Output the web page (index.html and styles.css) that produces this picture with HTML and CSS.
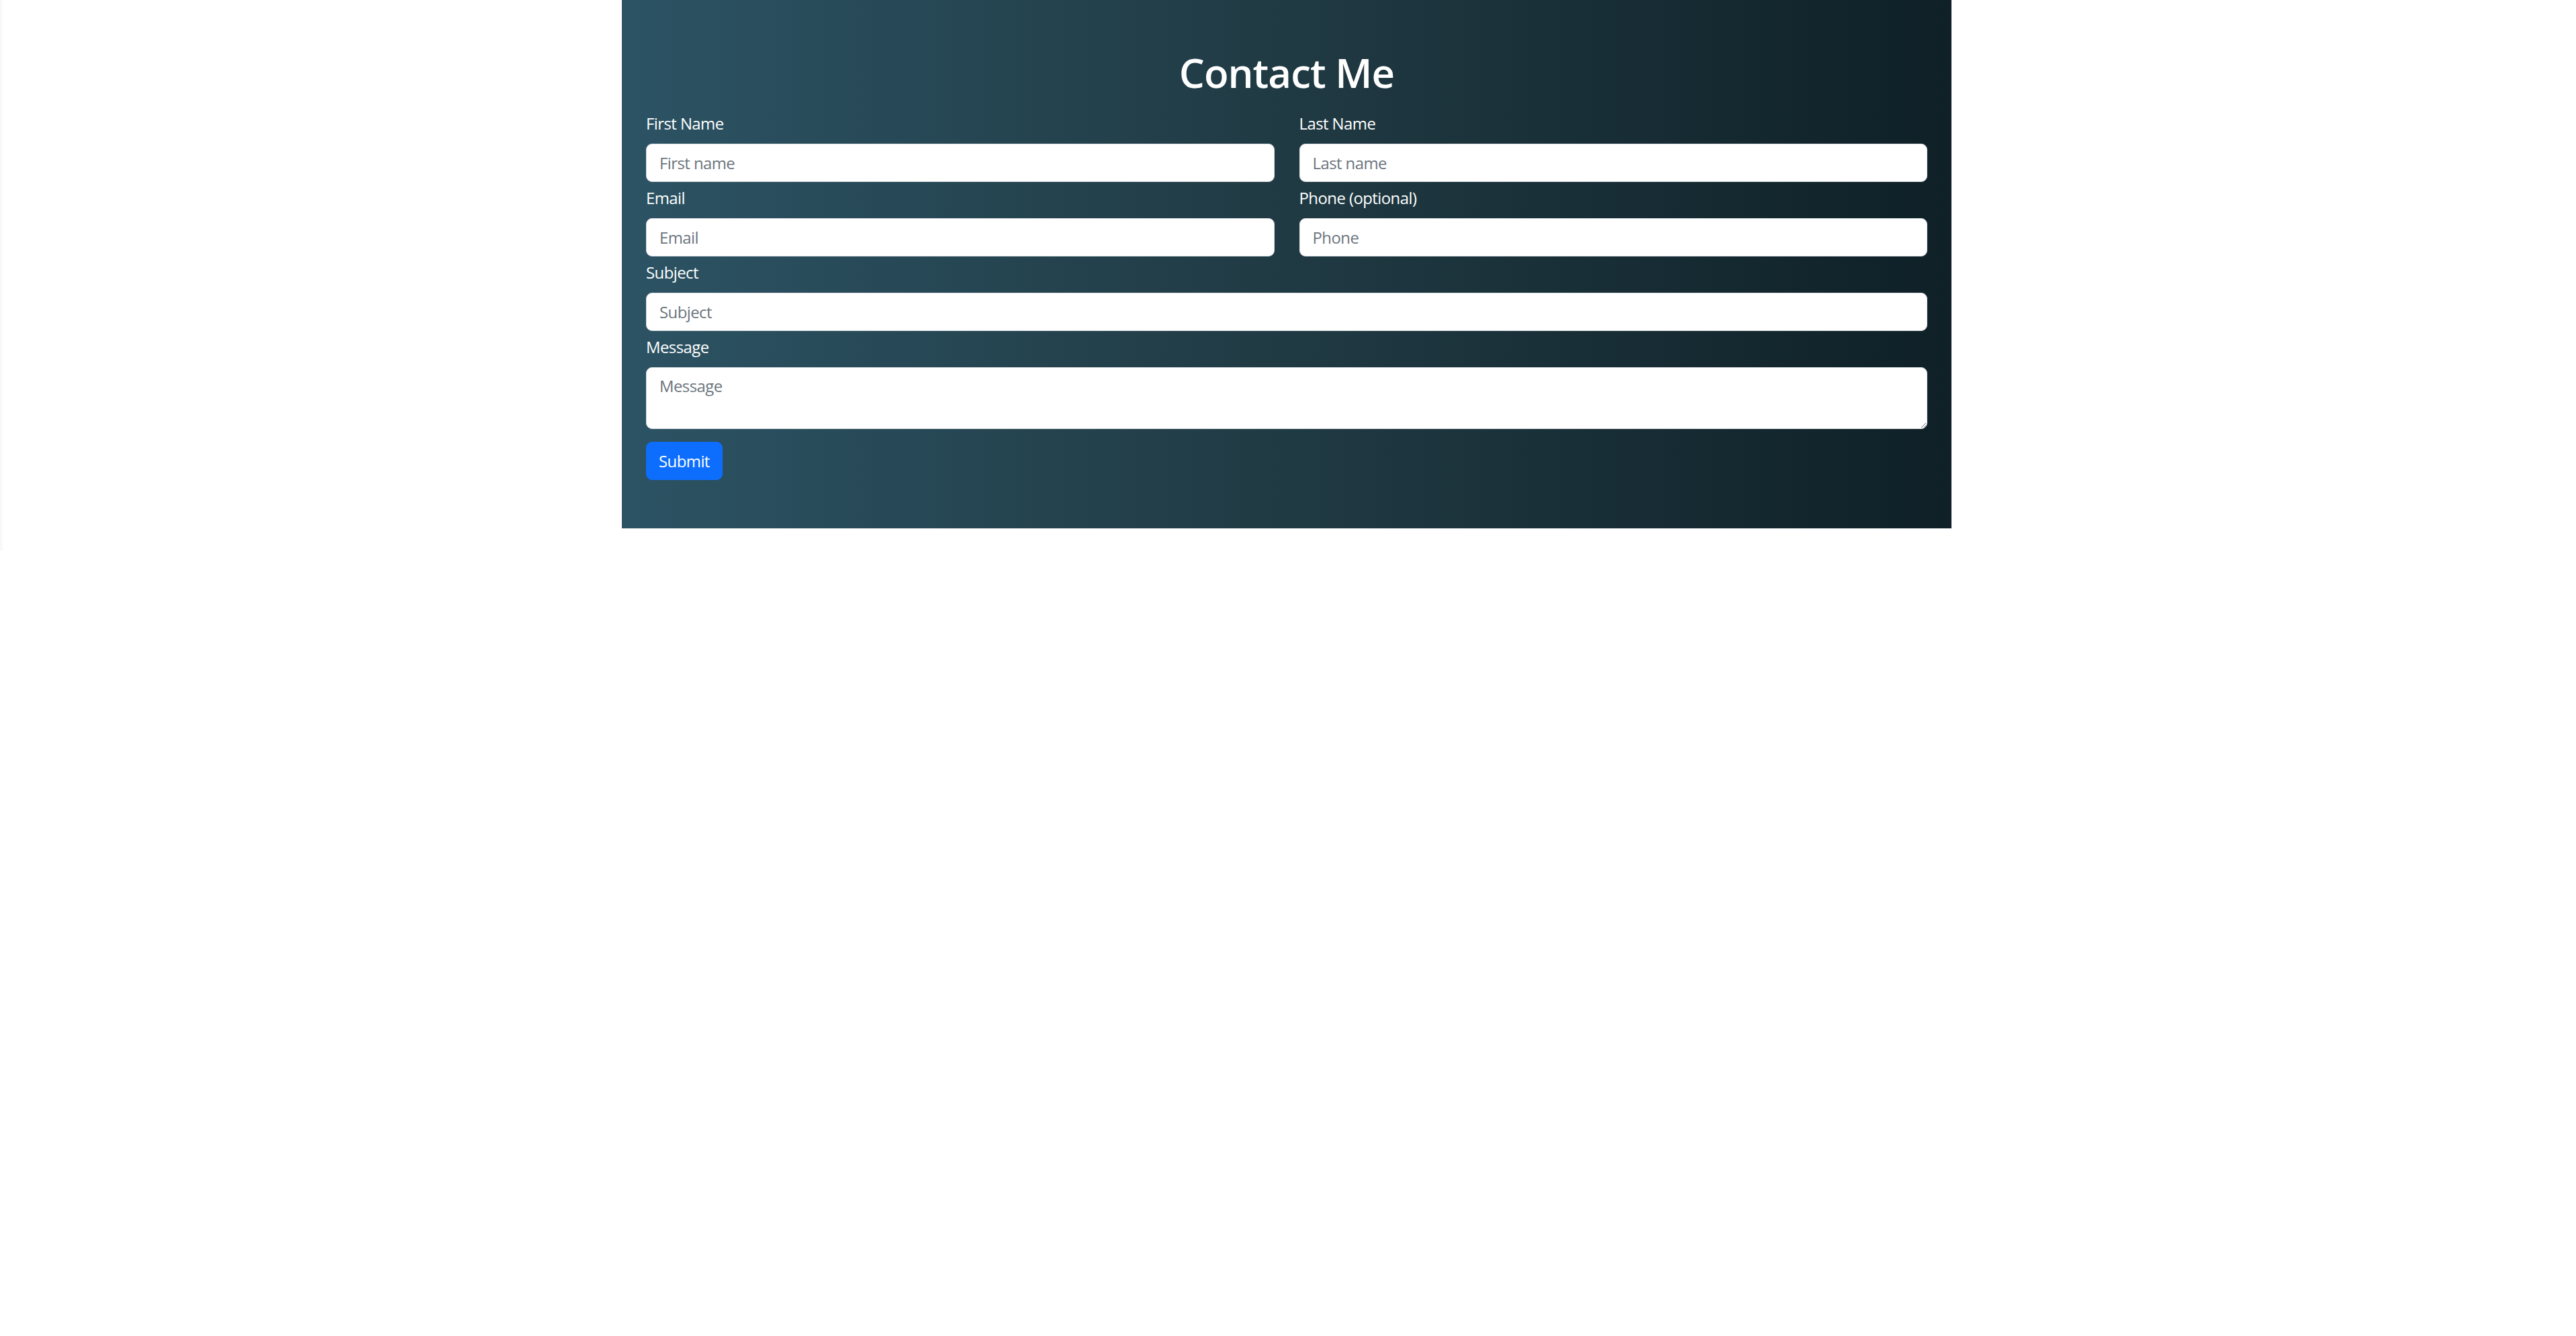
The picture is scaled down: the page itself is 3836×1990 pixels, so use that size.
FILE: index.html
```html
<!DOCTYPE html>
<html lang="en">
<head>
<meta charset="utf-8">
<title>Contact Me</title>
<link rel="stylesheet" href="styles.css">
</head>
<body>
<div class="page">
  <section class="contact">
    <h1 class="contact-title">Contact Me</h1>
    <form class="contact-form">
      <div class="form-row two-col">
        <div class="field">
          <label class="field-label" for="first">First Name</label>
          <input class="field-input" id="first" type="text" placeholder="First name">
        </div>
        <div class="field">
          <label class="field-label" for="last">Last Name</label>
          <input class="field-input" id="last" type="text" placeholder="Last name">
        </div>
      </div>
      <div class="form-row two-col">
        <div class="field">
          <label class="field-label" for="email">Email</label>
          <input class="field-input" id="email" type="email" placeholder="Email">
        </div>
        <div class="field">
          <label class="field-label" for="phone">Phone (optional)</label>
          <input class="field-input" id="phone" type="tel" placeholder="Phone">
        </div>
      </div>
      <div class="form-row">
        <div class="field">
          <label class="field-label" for="subject">Subject</label>
          <input class="field-input" id="subject" type="text" placeholder="Subject">
        </div>
      </div>
      <div class="form-row message-row">
        <div class="field">
          <label class="field-label" for="message">Message</label>
          <textarea class="field-input field-textarea" id="message" rows="2" placeholder="Message"></textarea>
        </div>
      </div>
      <div class="form-actions">
        <button class="submit-btn" type="submit">Submit</button>
      </div>
    </form>
  </section>
</div>
</body>
</html>
```

FILE: styles.css
```css
* {
  box-sizing: border-box;
}

html, body {
  margin: 0;
  padding: 0;
  background: #ffffff;
}

body {
  font-family: "Open Sans", "Noto Sans", "Liberation Sans", sans-serif;
  color: #212529;
}

.page {
  min-height: 820px;
  box-shadow: inset 5px 0 5px -3px rgba(0, 0, 0, 0.05);
}

.contact {
  width: 1980px;
  margin-left: calc(50% - 992px);
  padding: 72px 36px;
  background: linear-gradient(to right, #2c5364 0%, #203a43 50%, #0f2027 100%);
}

.contact-title {
  margin: 0 0 22px;
  font-size: 60px;
  line-height: 72px;
  font-weight: 600;
  letter-spacing: -1px;
  color: #ffffff;
  text-align: center;
}

.contact-form {
  display: flex;
  flex-direction: column;
}

.form-row {
  margin-bottom: 6px;
}

.form-row.two-col {
  display: grid;
  grid-template-columns: 1fr 1fr;
  column-gap: 37px;
}

.form-row.message-row {
  margin-bottom: 19px;
}

.field {
  display: flex;
  flex-direction: column;
}

.field-label {
  display: block;
  margin-bottom: 12px;
  font-size: 24px;
  line-height: 36px;
  letter-spacing: -0.6px;
  color: #ffffff;
}

.field-input {
  display: block;
  width: 100%;
  height: 57px;
  padding: 0 19px;
  font-family: inherit;
  font-size: 24px;
  line-height: 36px;
  letter-spacing: -0.6px;
  color: #212529;
  background: #ffffff;
  border: 1px solid #dee2e6;
  border-radius: 9px;
  outline: none;
}

.field-input::placeholder {
  color: #6c757d;
  opacity: 1;
}

.field-textarea {
  height: 92px;
  padding: 9px 19px;
  resize: vertical;
}

.form-actions {
  display: flex;
}

.submit-btn {
  height: 57px;
  padding: 0 18px;
  font-family: inherit;
  font-size: 24px;
  line-height: 36px;
  letter-spacing: -0.6px;
  color: #ffffff;
  background: #0d6efd;
  border: 1px solid #0d6efd;
  border-radius: 9px;
  cursor: pointer;
}
```
